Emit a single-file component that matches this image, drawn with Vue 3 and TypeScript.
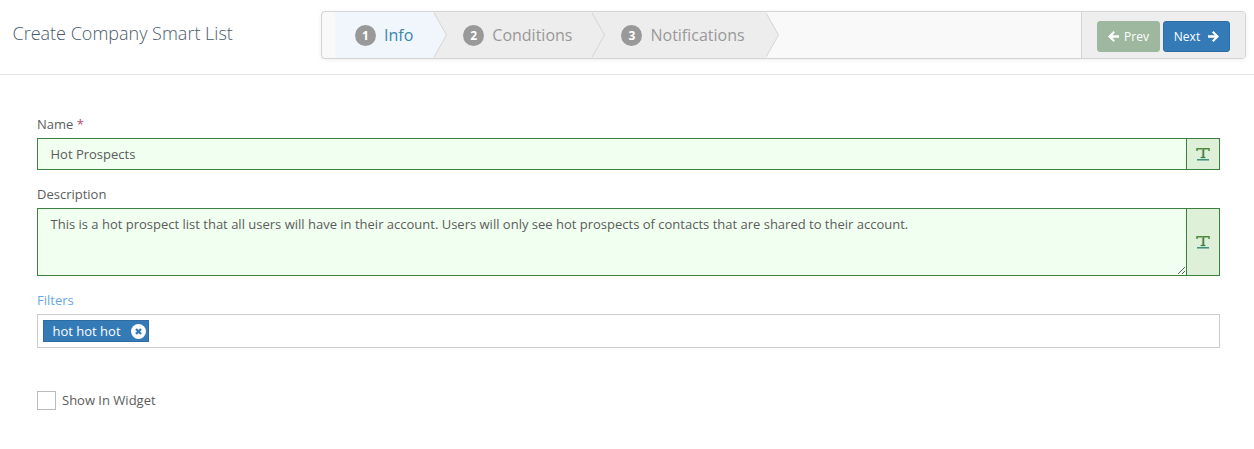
<script setup lang="ts">
import { ref } from 'vue'

const steps = [
  { id: 1, label: 'Info' },
  { id: 2, label: 'Conditions' },
  { id: 3, label: 'Notifications' },
]
const current = ref(1)
const name = ref('Hot Prospects')
const description = ref(
  'This is a hot prospect list that all users will have in their account. Users will only see hot prospects of contacts that are shared to their account.',
)
const showInWidget = ref(false)
</script>

<template>
  <div class="page">
    <header class="top">
      <h1 class="title">Create Company Smart List</h1>
      <div class="wizard">
        <ul class="steps">
          <li v-for="s in steps" :key="s.id" class="step" :class="{ active: s.id === current }">
            <span class="badge">{{ s.id }}</span>
            <span class="step-label">{{ s.label }}</span>
          </li>
        </ul>
        <div class="actions">
          <button class="btn prev" type="button">
            <svg class="arrow" viewBox="0 0 11 11" width="11" height="11">
              <path d="M5.5 0 7 1.5 4.3 4.2H11v2.6H4.3L7 9.5 5.5 11 0 5.5z" />
            </svg>
            Prev
          </button>
          <button class="btn next" type="button">
            Next
            <svg class="arrow" viewBox="0 0 11 11" width="11" height="11">
              <path d="M5.5 0 4 1.5l2.7 2.7H0v2.6h6.7L4 9.5 5.5 11 11 5.5z" />
            </svg>
          </button>
        </div>
      </div>
    </header>

    <form class="form" @submit.prevent>
      <div class="field">
        <label class="label">Name <span class="req">*</span></label>
        <div class="input-group">
          <input v-model="name" class="control" type="text" />
          <span class="addon">
            <svg viewBox="0 0 14 14" width="14" height="14">
              <path d="M1 4V1.7h12V4" fill="none" stroke="#4f8a3a" stroke-width="1.5" />
              <path d="M6.6 1.7v9" stroke="#b3a24a" stroke-width="1.4" />
              <path d="M7.6 1.7v9" stroke="#2f8a78" stroke-width="1.4" />
              <path d="M4.6 10.5h4.8" stroke="#3f8048" stroke-width="1.3" />
              <path d="M1 12.8h12" stroke="#2f8a78" stroke-width="1.4" />
            </svg>
          </span>
        </div>
      </div>

      <div class="field">
        <label class="label">Description</label>
        <div class="input-group tall">
          <textarea v-model="description" class="control area"></textarea>
          <span class="addon">
            <svg viewBox="0 0 14 14" width="14" height="14">
              <path d="M1 4V1.7h12V4" fill="none" stroke="#4f8a3a" stroke-width="1.5" />
              <path d="M6.6 1.7v9" stroke="#b3a24a" stroke-width="1.4" />
              <path d="M7.6 1.7v9" stroke="#2f8a78" stroke-width="1.4" />
              <path d="M4.6 10.5h4.8" stroke="#3f8048" stroke-width="1.3" />
              <path d="M1 12.8h12" stroke="#2f8a78" stroke-width="1.4" />
            </svg>
          </span>
        </div>
      </div>

      <div class="field">
        <label class="label filters">Filters</label>
        <div class="tags">
          <span class="tag">
            hot hot hot
            <svg class="tag-x" viewBox="0 0 15 15" width="15" height="15">
              <circle cx="7.5" cy="7.5" r="7.5" fill="#fff" />
              <path d="M5 5l5 5M10 5l-5 5" stroke="#337ab7" stroke-width="2.3" />
            </svg>
          </span>
        </div>
      </div>

      <label class="check">
        <input v-model="showInWidget" type="checkbox" class="check-input" />
        <span class="check-box"></span>
        <span class="check-text">Show In Widget</span>
      </label>
    </form>
  </div>
</template>

<style scoped>
.page {
  width: 1254px;
  height: 449px;
  background: #fff;
  font-family: 'Open Sans', sans-serif;
  font-size: 13px;
  color: #5c5c5c;
  overflow: hidden;
}
.top {
  height: 75px;
  box-sizing: border-box;
  border-bottom: 1px solid #e5e5e5;
  padding: 11px 8px 0 12.5px;
  display: flex;
  justify-content: space-between;
  align-items: flex-start;
}
.title {
  margin: 9px 0 0;
  font-size: 18px;
  line-height: 26px;
  font-weight: 300;
  color: #4a5a6a;
}
.wizard {
  width: 925px;
  height: 48px;
  box-sizing: border-box;
  border: 1px solid #d4d4d4;
  border-radius: 4px;
  background: #f9f9f9;
  box-shadow: 0 1px 4px rgba(0, 0, 0, 0.065);
  display: flex;
  justify-content: space-between;
}
.steps {
  list-style: none;
  margin: 0;
  padding: 0 0 0 13px;
  display: flex;
}
.step {
  position: relative;
  height: 46px;
  box-sizing: border-box;
  padding: 0 20px 0 30px;
  display: flex;
  align-items: center;
  gap: 8px;
  background: #ededed;
  color: #999;
  font-size: 16px;
}
.step:first-child {
  padding-left: 20px;
}
.step:nth-child(2) {
  padding-right: 19px;
}
.step::before,
.step::after {
  content: '';
  position: absolute;
  top: 0;
  left: 100%;
  width: 0;
  height: 0;
  border-style: solid;
  border-width: 23px 0 23px 13px;
}
.step::before {
  margin-left: 1px;
  border-color: transparent transparent transparent #d4d4d4;
  z-index: 1;
}
.step::after {
  border-color: transparent transparent transparent #ededed;
  z-index: 2;
}
.step.active {
  background: #f1f6fd;
  color: #3a87ad;
}
.step.active::after {
  border-left-color: #f1f6fd;
}
.badge {
  width: 21px;
  height: 21px;
  border-radius: 50%;
  background: #999;
  color: #fff;
  font-size: 12px;
  font-weight: 700;
  line-height: 21px;
  text-align: center;
}
.actions {
  width: 164px;
  box-sizing: border-box;
  border-left: 1px solid #d4d4d4;
  border-radius: 0 3px 3px 0;
  background: #eee;
  padding: 9px 15px 0;
  display: flex;
  gap: 3px;
  align-items: flex-start;
}
.btn {
  height: 31px;
  border: 1px solid transparent;
  border-radius: 3px;
  padding: 0;
  color: #fff;
  font-family: inherit;
  font-size: 12px;
  font-weight: 400;
  display: flex;
  align-items: center;
  justify-content: center;
}
.prev {
  width: 63px;
  background: #9db89e;
  border-color: #9db89e;
  gap: 5px;
}
.next {
  width: 67px;
  background: #337ab7;
  border-color: #2e6da4;
  gap: 8px;
}
.arrow {
  fill: #fff;
}
.form {
  padding: 40px 34px 0 37px;
}
.field {
  margin-bottom: 15px;
}
.field:nth-child(3) {
  margin-bottom: 0;
}
.label {
  display: block;
  height: 23px;
  line-height: 18px;
  font-size: 13px;
  color: #5c5c5c;
}
.req {
  color: #b94a6a;
}
.filters {
  color: #6aa9e9;
}
.input-group {
  display: flex;
  height: 32px;
  box-sizing: border-box;
  border: 1px solid #3c8040;
  background: #f0fff0;
}
.input-group.tall {
  height: 68px;
}
.control {
  flex: 1;
  min-width: 0;
  border: 0;
  outline: 0;
  background: transparent;
  padding: 0 12.5px;
  font-family: inherit;
  font-size: 13px;
  color: #5c5c5c;
}
.area {
  padding: 6px 12.5px;
  line-height: 18px;
  resize: vertical;
}
.addon {
  width: 33px;
  flex: none;
  box-sizing: border-box;
  border-left: 1px solid #3c8040;
  background: #dff0d8;
  display: flex;
  align-items: center;
  justify-content: center;
}
.tags {
  height: 34px;
  box-sizing: border-box;
  border: 1px solid #ccc;
  padding: 5px;
}
.tag {
  display: inline-flex;
  align-items: center;
  height: 22px;
  box-sizing: border-box;
  border: 1px solid #2e6da4;
  background: #337ab7;
  color: #fff;
  font-size: 13px;
  padding: 0 2.5px 0 8.5px;
  gap: 10px;
}
.check {
  margin-top: 43px;
  display: flex;
  align-items: center;
  gap: 6px;
  font-size: 13px;
  color: #5c5c5c;
}
.check-text {
  margin-top: -2px;
}
.check-input {
  position: absolute;
  opacity: 0;
  margin: 0;
}
.check-box {
  width: 19px;
  height: 19px;
  box-sizing: border-box;
  border: 1px solid #bbb;
  background: #fff;
}
</style>

<style>
body {
  background: #fff;
}
</style>
